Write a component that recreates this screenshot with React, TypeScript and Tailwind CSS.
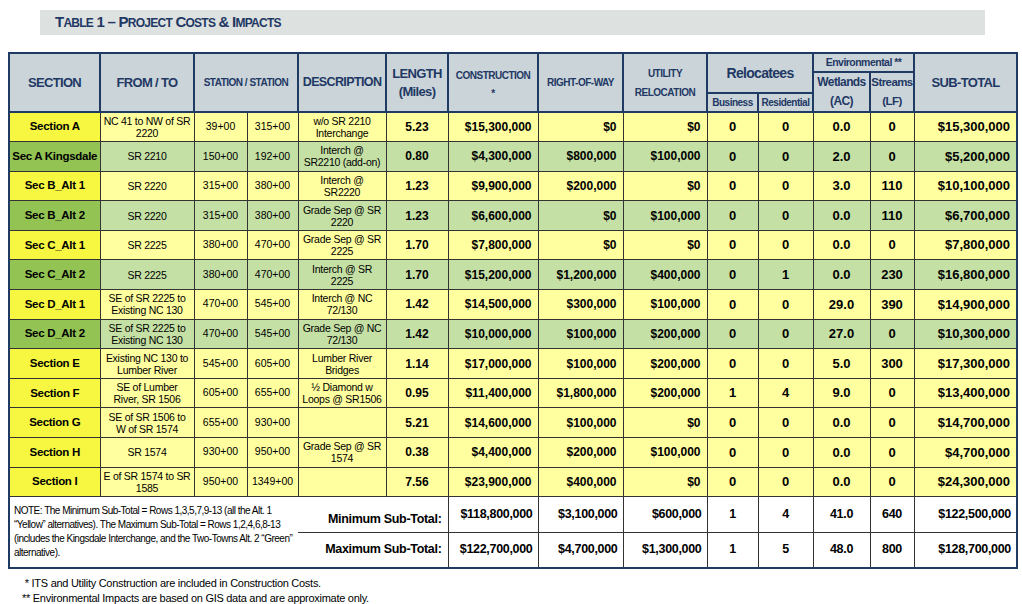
import React from "react";

type Row = { s: string; f: string; a: string; b: string; d: string; l: string; c: string; r: string; u: string; bu: string; re: string; w: string; st: string; t: string; g: boolean };
const rows: Row[] = [
  { s: "Section A", f: "NC 41 to NW of SR 2220", a: "39+00", b: "315+00", d: "w/o SR 2210 Interchange", l: "5.23", c: "$15,300,000", r: "$0", u: "$0", bu: "0", re: "0", w: "0.0", st: "0", t: "$15,300,000", g: false },
  { s: "Sec A Kingsdale", f: "SR 2210", a: "150+00", b: "192+00", d: "Interch @ SR2210 (add-on)", l: "0.80", c: "$4,300,000", r: "$800,000", u: "$100,000", bu: "0", re: "0", w: "2.0", st: "0", t: "$5,200,000", g: true },
  { s: "Sec B_Alt 1", f: "SR 2220", a: "315+00", b: "380+00", d: "Interch @ SR2220", l: "1.23", c: "$9,900,000", r: "$200,000", u: "$0", bu: "0", re: "0", w: "3.0", st: "110", t: "$10,100,000", g: false },
  { s: "Sec B_Alt 2", f: "SR 2220", a: "315+00", b: "380+00", d: "Grade Sep @ SR 2220", l: "1.23", c: "$6,600,000", r: "$0", u: "$100,000", bu: "0", re: "0", w: "0.0", st: "110", t: "$6,700,000", g: true },
  { s: "Sec C_Alt 1", f: "SR 2225", a: "380+00", b: "470+00", d: "Grade Sep @ SR 2225", l: "1.70", c: "$7,800,000", r: "$0", u: "$0", bu: "0", re: "0", w: "0.0", st: "0", t: "$7,800,000", g: false },
  { s: "Sec C_Alt 2", f: "SR 2225", a: "380+00", b: "470+00", d: "Interch @ SR 2225", l: "1.70", c: "$15,200,000", r: "$1,200,000", u: "$400,000", bu: "0", re: "1", w: "0.0", st: "230", t: "$16,800,000", g: true },
  { s: "Sec D_Alt 1", f: "SE of SR 2225 to Existing NC 130", a: "470+00", b: "545+00", d: "Interch @ NC 72/130", l: "1.42", c: "$14,500,000", r: "$300,000", u: "$100,000", bu: "0", re: "0", w: "29.0", st: "390", t: "$14,900,000", g: false },
  { s: "Sec D_Alt 2", f: "SE of SR 2225 to Existing NC 130", a: "470+00", b: "545+00", d: "Grade Sep @ NC 72/130", l: "1.42", c: "$10,000,000", r: "$100,000", u: "$200,000", bu: "0", re: "0", w: "27.0", st: "0", t: "$10,300,000", g: true },
  { s: "Section E", f: "Existing NC 130 to Lumber River", a: "545+00", b: "605+00", d: "Lumber River Bridges", l: "1.14", c: "$17,000,000", r: "$100,000", u: "$200,000", bu: "0", re: "0", w: "5.0", st: "300", t: "$17,300,000", g: false },
  { s: "Section F", f: "SE of Lumber River, SR 1506", a: "605+00", b: "655+00", d: "½ Diamond w Loops @ SR1506", l: "0.95", c: "$11,400,000", r: "$1,800,000", u: "$200,000", bu: "1", re: "4", w: "9.0", st: "0", t: "$13,400,000", g: false },
  { s: "Section G", f: "SE of SR 1506 to W of SR 1574", a: "655+00", b: "930+00", d: "", l: "5.21", c: "$14,600,000", r: "$100,000", u: "$0", bu: "0", re: "0", w: "0.0", st: "0", t: "$14,700,000", g: false },
  { s: "Section H", f: "SR 1574", a: "930+00", b: "950+00", d: "Grade Sep @ SR 1574", l: "0.38", c: "$4,400,000", r: "$200,000", u: "$100,000", bu: "0", re: "0", w: "0.0", st: "0", t: "$4,700,000", g: false },
  { s: "Section I", f: "E of SR 1574 to SR 1585", a: "950+00", b: "1349+00", d: "", l: "7.56", c: "$23,900,000", r: "$400,000", u: "$0", bu: "0", re: "0", w: "0.0", st: "0", t: "$24,300,000", g: false },
];

const lib = { fontFamily: '"Liberation Sans",Arial,sans-serif' };
const H = "border-2 border-[#1f3b63] bg-[#cad4d9] text-[#1f3864] font-bold text-center align-middle tracking-tighter p-0";
const C = "border border-[#333] align-middle text-center p-0 overflow-hidden";

export default function App() {
  return (
    <div className="w-[1022px] h-[604px] bg-white relative overflow-hidden" style={lib}>
      <div className="ml-[40px] mt-[10px] w-[945px] h-[25px] bg-[#dde1df] flex items-center pl-[15px]">
        <span className="text-[#1f3864] font-bold text-[15px] tracking-tighter">
          T<span className="text-[12px]">ABLE</span> 1 – P<span className="text-[12px]">ROJECT</span> C<span className="text-[12px]">OSTS</span> &amp; I<span className="text-[12px]">MPACTS</span>
        </span>
      </div>
      <table className="ml-[8px] mt-[17px] border-collapse border-2 border-[#1f3b63] table-fixed" style={{ width: 1008 }}>
        <colgroup>
          {[91, 94, 53, 51, 88, 62, 90, 85, 84, 51, 55, 57, 44, 103].map((w, i) => <col key={i} style={{ width: w }} />)}
        </colgroup>
        <thead>
          <tr className="h-[19px]">
            <th rowSpan={3} className={H + " text-[13px]"}>SECTION</th>
            <th rowSpan={3} className={H + " text-[13px]"}>FROM / TO</th>
            <th rowSpan={3} colSpan={2} className={H + " text-[10px]"}>STATION / STATION</th>
            <th rowSpan={3} className={H + " text-[12.5px]"}>DESCRIPTION</th>
            <th rowSpan={3} className={H + " text-[13px] leading-[18px]"}>LENGTH<br />(Miles)</th>
            <th rowSpan={3} className={H + " text-[10px] leading-[18px] pt-1"}>CONSTRUCTION<br />*</th>
            <th rowSpan={3} className={H + " text-[10px]"}>RIGHT-OF-WAY</th>
            <th rowSpan={3} className={H + " text-[10px] leading-[19px]"}>UTILITY<br />RELOCATION</th>
            <th rowSpan={2} colSpan={2} className={H + " text-[14px]"}>Relocatees</th>
            <th colSpan={2} className={H + " text-[10.5px] tracking-normal"}>Environmental **</th>
            <th rowSpan={3} className={H + " text-[13px]"}>SUB-TOTAL</th>
          </tr>
          <tr className="h-[21px]">
            <th rowSpan={2} className={H + " text-[12px] leading-[19px]"}>Wetlands<br />(AC)</th>
            <th rowSpan={2} className={H + " text-[11.5px] leading-[19px]"}>Streams<br />(LF)</th>
          </tr>
          <tr className="h-[19px]">
            <th className={H + " text-[10px]"}>Business</th>
            <th className={H + " text-[10px]"}>Residential</th>
          </tr>
        </thead>
        <tbody>
          {rows.map((r, i) => {
            const bg = r.g ? "bg-[#c5e0a4]" : "bg-[#ffff9f]";
            const first = r.g ? "bg-[#92c353]" : "bg-[#f7f741]";
            const sm = "text-[10.5px] leading-[12px] text-black px-[3px] tracking-tight";
            const num = "text-[13px] font-bold text-black";
            return (
              <tr key={i} className={"h-[29.6px] " + bg}>
                <td className={C + " " + first + " text-[11.5px] font-bold whitespace-nowrap tracking-tight"}>{r.s}</td>
                <td className={C + " " + sm}>{r.f}</td>
                <td className={C + " text-[10.5px]"}>{r.a}</td>
                <td className={C + " text-[10.5px]"}>{r.b}</td>
                <td className={C + " " + sm}>{r.d}</td>
                <td className={C + " text-[12px] font-bold"}>{r.l}</td>
                <td className={C + " text-[12px] font-bold text-right pr-[6px]"}>{r.c}</td>
                <td className={C + " text-[12px] font-bold text-right pr-[6px]"}>{r.r}</td>
                <td className={C + " text-[12px] font-bold text-right pr-[6px]"}>{r.u}</td>
                <td className={C + " " + num}>{r.bu}</td>
                <td className={C + " " + num}>{r.re}</td>
                <td className={C + " " + num}>{r.w}</td>
                <td className={C + " " + num}>{r.st}</td>
                <td className={C + " text-[13px] font-bold text-right pr-[6px]"}>{r.t}</td>
              </tr>
            );
          })}
          {[
            ["Minimum Sub-Total:", "$118,800,000", "$3,100,000", "$600,000", "1", "4", "41.0", "640", "$122,500,000"],
            ["Maximum Sub-Total:", "$122,700,000", "$4,700,000", "$1,300,000", "1", "5", "48.0", "800", "$128,700,000"],
          ].map((v, i) => (
            <tr key={i} className="h-[35.5px] bg-white">
              {i === 0 && (
                <td colSpan={4} rowSpan={2} className="border border-[#333] border-r-0 text-[10px] leading-[14px] px-[4px] align-middle tracking-tighter">
                  NOTE: The Minimum Sub-Total = Rows 1,3,5,7,9-13 (all the Alt. 1 “Yellow” alternatives). The Maximum Sub-Total = Rows 1,2,4,6,8-13 (includes the Kingsdale Interchange, and the Two-Towns Alt. 2 “Green” alternative).
                </td>
              )}
              <td colSpan={2} className={"border-b border-[#333] text-right pr-[6px] text-[12.5px] font-bold align-middle whitespace-nowrap tracking-tight" + (i === 0 ? " pt-[10px]" : "")}>{v[0]}</td>
              {v.slice(1).map((x, j) => (
                <td key={j} className={C + " text-[12.5px] font-bold tracking-tight " + (j < 3 || j === 7 ? "text-right pr-[5px]" : "")}>{x}</td>
              ))}
            </tr>
          ))}
        </tbody>
      </table>
      <div className="mt-[7px] ml-[22px] text-[11px] leading-[15px] text-black tracking-tight">
        <div>&nbsp;* ITS and Utility Construction are included in Construction Costs.</div>
        <div>** Environmental Impacts are based on GIS data and are approximate only.</div>
      </div>
    </div>
  );
}
